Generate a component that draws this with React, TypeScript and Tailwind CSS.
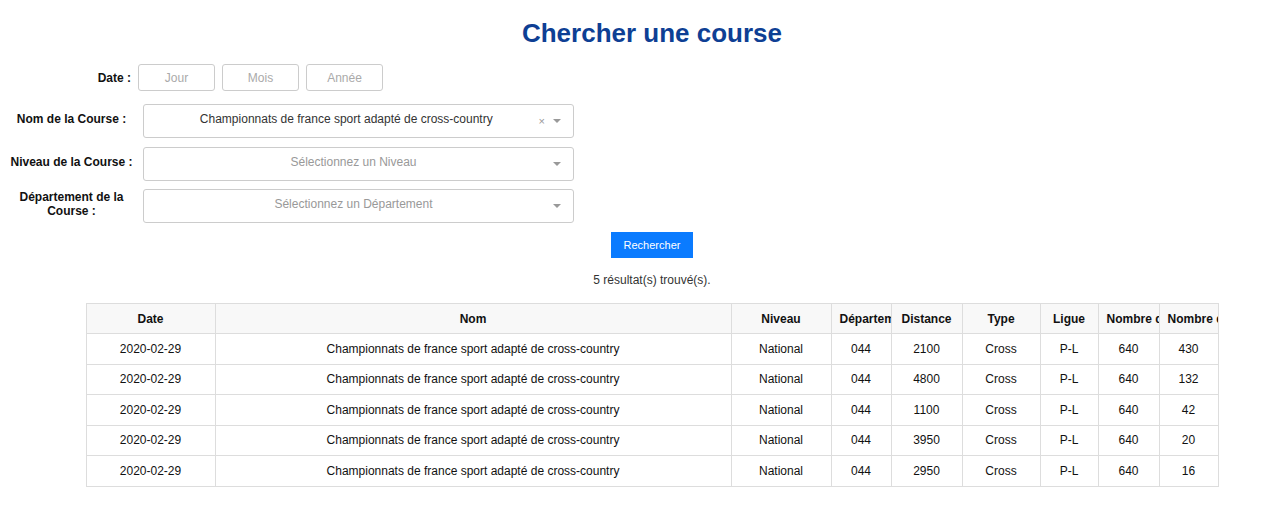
import React from 'react';

interface Row {
  date: string;
  nom: string;
  niveau: string;
  dep: string;
  distance: string;
  type: string;
  ligue: string;
  n1: string;
  n2: string;
}

const rows: Row[] = [
  { date: '2020-02-29', nom: 'Championnats de france sport adapté de cross-country', niveau: 'National', dep: '044', distance: '2100', type: 'Cross', ligue: 'P-L', n1: '640', n2: '430' },
  { date: '2020-02-29', nom: 'Championnats de france sport adapté de cross-country', niveau: 'National', dep: '044', distance: '4800', type: 'Cross', ligue: 'P-L', n1: '640', n2: '132' },
  { date: '2020-02-29', nom: 'Championnats de france sport adapté de cross-country', niveau: 'National', dep: '044', distance: '1100', type: 'Cross', ligue: 'P-L', n1: '640', n2: '42' },
  { date: '2020-02-29', nom: 'Championnats de france sport adapté de cross-country', niveau: 'National', dep: '044', distance: '3950', type: 'Cross', ligue: 'P-L', n1: '640', n2: '20' },
  { date: '2020-02-29', nom: 'Championnats de france sport adapté de cross-country', niveau: 'National', dep: '044', distance: '2950', type: 'Cross', ligue: 'P-L', n1: '640', n2: '16' },
];

const columns = [
  { label: 'Date', w: 'w-[129px]' },
  { label: 'Nom', w: 'w-[516px]' },
  { label: 'Niveau', w: 'w-[100px]' },
  { label: 'Département', w: 'w-[60px]' },
  { label: 'Distance', w: 'w-[71px]' },
  { label: 'Type', w: 'w-[78px]' },
  { label: 'Ligue', w: 'w-[58px]' },
  { label: 'Nombre de participants', w: 'w-[61px]' },
  { label: 'Nombre de classés', w: 'w-[59px]' },
];

const Arrow = () => (
  <span className="w-0 h-0 border-x-[4px] border-x-transparent border-t-[4px] border-t-[#999]" />
);

const Select: React.FC<{ value?: string; placeholder: string; clearable?: boolean }> = ({ value, placeholder, clearable }) => (
  <div className="w-[431px] h-[34px] border border-[#ccc] rounded-[3px] bg-white flex items-start pt-[5px] pl-[10px] pr-[12px]">
    <span className={`flex-1 text-center text-[12px] ${value ? 'text-[#333]' : 'text-[#999]'}`}>
      {value || placeholder}
    </span>
    <span className="flex items-center gap-[8px] h-[16px] mt-[3px]">
      {clearable && <span className="text-[11px] text-[#999] leading-none">×</span>}
      <Arrow />
    </span>
  </div>
);

const App: React.FC = () => {
  const vals = (r: Row) => [r.date, r.nom, r.niveau, r.dep, r.distance, r.type, r.ligue, r.n1, r.n2];

  return (
    <div className="w-[1274px] h-[513px] bg-white text-[#222] font-['Liberation_Sans',Arial,sans-serif] overflow-hidden">
      <h1 className="pl-[30px] pt-[17px] text-center text-[26px] font-bold text-[#0e3f94] leading-[32px]">
        Chercher une course
      </h1>

      <div className="mt-[15px] flex flex-col">
        <div className="flex items-center h-[27px]">
          <div className="w-[131px] text-right text-[12px] font-bold text-[#111]">Date :</div>
          <div className="flex gap-[7px] ml-[7px]">
            {['Jour', 'Mois', 'Année'].map((p) => (
              <div
                key={p}
                className="w-[77px] h-[27px] border border-[#ccc] rounded-[3px] text-[12px] text-[#aaa] text-center pt-[4px]"
              >
                {p}
              </div>
            ))}
          </div>
        </div>

        <div className="flex items-center mt-[13px]">
          <div className="w-[143px] text-center text-[12px] font-bold text-[#111] pb-[4px]">Nom de la Course :</div>
          <Select value="Championnats de france sport adapté de cross-country" placeholder="" clearable />
        </div>

        <div className="flex items-center mt-[9px]">
          <div className="w-[143px] text-center text-[12px] font-bold text-[#111] pb-[4px]">Niveau de la Course :</div>
          <Select placeholder="Sélectionnez un Niveau" />
        </div>

        <div className="flex items-center mt-[8px]">
          <div className="w-[143px] text-center text-[12px] font-bold text-[#111] leading-[14px] px-[16px] pb-[4px]">
            Département de la Course :
          </div>
          <Select placeholder="Sélectionnez un Département" />
        </div>
      </div>

      <div className="pl-[30px] flex flex-col items-center">
        <button className="mt-[9px] w-[82px] h-[26px] bg-[#0a7bff] text-white text-[11px]">
          Rechercher
        </button>
        <p className="mt-[15px] text-[12px] text-[#333] leading-[14px]">5 résultat(s) trouvé(s).</p>

        <table className="mt-[16px] w-[1132px] border-collapse table-fixed text-[12px] text-[#111]">
          <colgroup>
            {columns.map((c) => (
              <col key={c.label} className={c.w} />
            ))}
          </colgroup>
          <thead>
            <tr className="bg-[#f8f8f8] h-[30px]">
              {columns.map((c) => (
                <th
                  key={c.label}
                  className="border border-[#ddd] font-bold text-center whitespace-nowrap overflow-hidden px-[8px]"
                >
                  {c.label}
                </th>
              ))}
            </tr>
          </thead>
          <tbody>
            {rows.map((r, i) => (
              <tr key={i} className="h-[30.5px]">
                {vals(r).map((v, j) => (
                  <td key={j} className="border border-[#ddd] text-center whitespace-nowrap overflow-hidden px-[8px]">
                    {v}
                  </td>
                ))}
              </tr>
            ))}
          </tbody>
        </table>
      </div>
    </div>
  );
};

export default App;
